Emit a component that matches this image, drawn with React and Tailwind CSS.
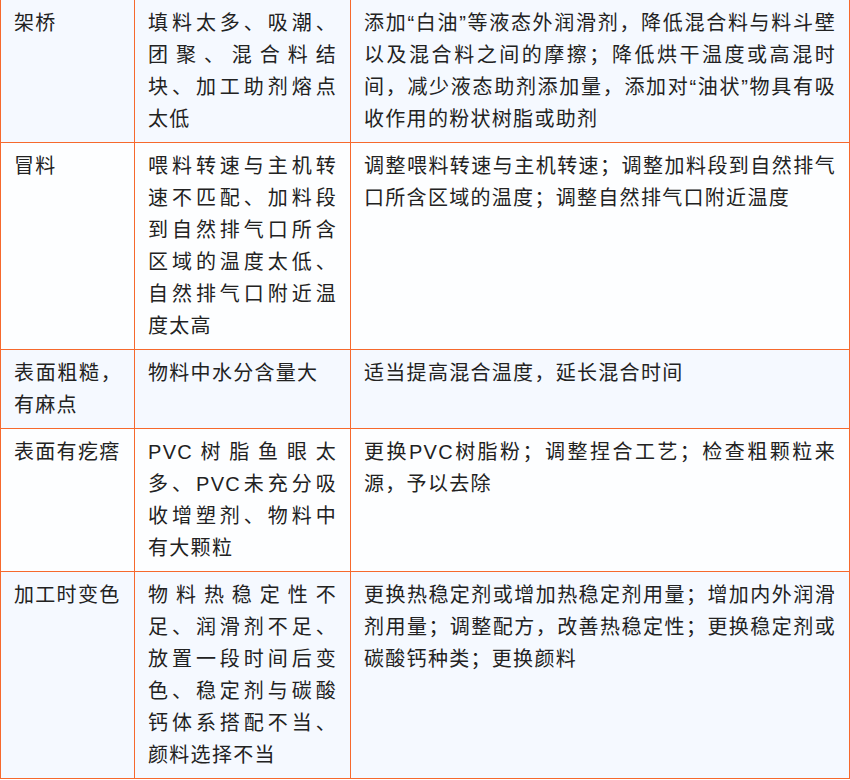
import React from "react";

const rows = [
  {
    a: "架桥",
    b: "填料太多、吸潮、团聚、混合料结块、加工助剂熔点太低",
    c: "添加“白油”等液态外润滑剂，降低混合料与料斗壁以及混合料之间的摩擦；降低烘干温度或高混时间，减少液态助剂添加量，添加对“油状”物具有吸收作用的粉状树脂或助剂",
    bg: "bg-[#f5f9ff]",
  },
  {
    a: "冒料",
    b: "喂料转速与主机转速不匹配、加料段到自然排气口所含区域的温度太低、自然排气口附近温度太高",
    c: "调整喂料转速与主机转速；调整加料段到自然排气口所含区域的温度；调整自然排气口附近温度",
    bg: "bg-[#fdfeff]",
  },
  {
    a: "表面粗糙，有麻点",
    b: "物料中水分含量大",
    c: "适当提高混合温度，延长混合时间",
    bg: "bg-[#f5f9ff]",
  },
  {
    a: "表面有疙瘩",
    b: "PVC树脂鱼眼太多、PVC未充分吸收增塑剂、物料中有大颗粒",
    c: "更换PVC树脂粉；调整捏合工艺；检查粗颗粒来源，予以去除",
    bg: "bg-[#fdfeff]",
  },
  {
    a: "加工时变色",
    b: "物料热稳定性不足、润滑剂不足、放置一段时间后变色、稳定剂与碳酸钙体系搭配不当、颜料选择不当",
    c: "更换热稳定剂或增加热稳定剂用量；增加内外润滑剂用量；调整配方，改善热稳定性；更换稳定剂或碳酸钙种类；更换颜料",
    bg: "bg-[#f5f9ff]",
  },
];

export default function App() {
  return (
    <div className="w-[850px] h-[780px] overflow-hidden bg-white">
      <div
        className="grid grid-cols-[135px_216px_499px] text-[20px] leading-[32px] tracking-[1.3px] text-[#222222]"
        style={{ fontFamily: '"Liberation Sans", "Noto Sans CJK SC", sans-serif' }}
      >
        {rows.map((r, i) => (
          <React.Fragment key={i}>
            <div className={`${r.bg} border-l border-r border-b border-[#f6692d] pl-[13px] pr-[12px] py-[7px] text-justify`}>
              {r.a}
            </div>
            <div className={`${r.bg} border-r border-b border-[#f6692d] pl-[13px] pr-[13px] py-[7px] text-justify`}>
              {r.b}
            </div>
            <div className={`${r.bg} border-r border-b border-[#f6692d] pl-[13px] pr-[13px] py-[7px] text-justify`}>
              {r.c}
            </div>
          </React.Fragment>
        ))}
      </div>
    </div>
  );
}
